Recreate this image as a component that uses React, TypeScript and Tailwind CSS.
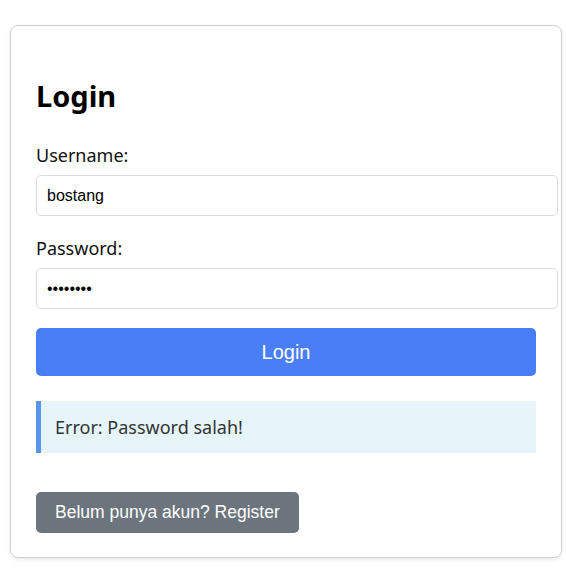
import React from "react";

export default function App() {
  const seg = { fontFamily: '"Noto Sans", "Open Sans", sans-serif' };
  const ar = { fontFamily: '"Liberation Sans", Arial, sans-serif' };
  return (
    <div className="bg-white w-[566px] h-[568px] pt-[25px] pl-[10px]">
      <div
        className="w-[552px] h-[533px] border border-[#d0d0d0] rounded-[8px] shadow-[0_2px_4px_rgba(0,0,0,0.08)] px-[25px] pt-[25px] flex flex-col"
        style={seg}
      >
        <h2 className="mt-[27px] text-[29px] leading-[36px] font-bold text-black">Login</h2>
        <label className="mt-[29px] text-[18px] leading-[24px] text-[#111]">Username:</label>
        <input
          readOnly
          value="bostang"
          className="mt-[8px] w-[522px] h-[41px] border border-[#dcdcdc] rounded-[5px] px-[10px] text-[16px] text-black outline-none"
          style={ar}
        />
        <label className="mt-[20px] text-[18px] leading-[24px] text-[#111]">Password:</label>
        <input
          readOnly
          type="password"
          value="bostang1"
          className="mt-[8px] w-[522px] h-[41px] border border-[#dcdcdc] rounded-[5px] px-[10px] text-[16px] text-black outline-none"
          style={ar}
        />
        <button
          className="mt-[19px] w-[500px] h-[48px] bg-[#4a7ef6] rounded-[5px] text-white text-[20px]"
          style={ar}
        >
          Login
        </button>
        <div className="mt-[25px] w-[500px] h-[52px] bg-[#e6f5f9] border-l-[5px] border-[#5a94ea] pl-[14px] flex items-center text-[18px] text-[#333]">
          Error: Password salah!
        </div>
        <div className="mt-[39px]">
          <button
            className="h-[41px] px-[19px] bg-[#6c757d] rounded-[5px] text-white text-[17.5px]"
            style={ar}
          >
            Belum punya akun? Register
          </button>
        </div>
      </div>
    </div>
  );
}
